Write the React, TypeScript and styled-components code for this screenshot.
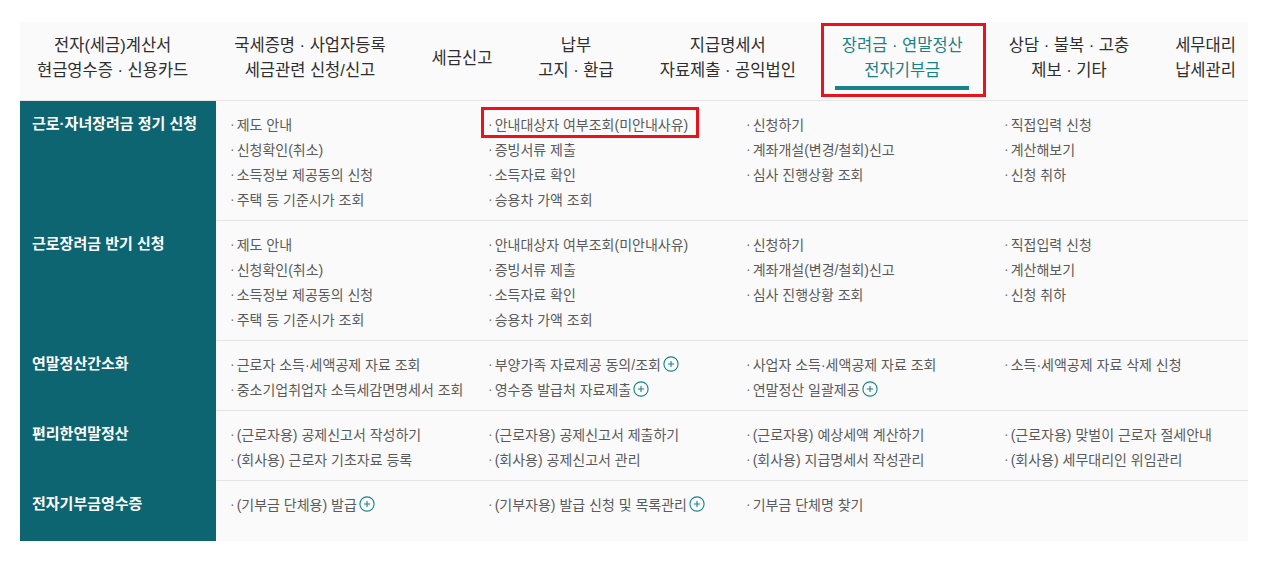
import React from "react";
import styled, { createGlobalStyle, css } from "styled-components";

const GlobalStyle = createGlobalStyle`
  html, body { margin: 0; padding: 0; background: #ffffff; }
  body { font-family: "Liberation Sans", "Noto Sans CJK KR", sans-serif; }
  * { box-sizing: border-box; }
`;

const TEAL = "#0c6570";
const ACCENT = "#17828a";
const RED = "#e8141b";

const Page = styled.div`
  padding: 22px 15px 20px 20px;
`;

const Panel = styled.div`
  width: 1228px;
  background: #fafafa;
`;

const TabBar = styled.nav`
  height: 79px;
  display: flex;
  justify-content: space-between;
  align-items: stretch;
  padding: 0 12px 0 17px;
  border-bottom: 1px solid #e6e6e6;
`;

const Tab = styled.div<{ $active?: boolean }>`
  position: relative;
  display: flex;
  flex-direction: column;
  justify-content: center;
  align-items: center;
  padding-bottom: 6px;
  font-size: 16.5px;
  line-height: 25px;
  color: ${(p) => (p.$active ? ACCENT : "#2e2e2e")};
  white-space: nowrap;
  ${(p) =>
    p.$active &&
    css`
      &::before {
        content: "";
        position: absolute;
        left: -7px;
        right: -6px;
        bottom: 10px;
        height: 4px;
        background: ${ACCENT};
      }
      &::after {
        content: "";
        position: absolute;
        left: -21px;
        right: -23px;
        top: 1px;
        bottom: 3px;
        border: 3px solid ${RED};
      }
    `}
`;

const Row = styled.div<{ $last?: boolean }>`
  display: grid;
  grid-template-columns: 196px 1fr;
  min-height: ${(p) => (p.$last ? "60px" : "0")};
`;

const Label = styled.div`
  background: ${TEAL};
  color: #ffffff;
  font-size: 15px;
  font-weight: 700;
  line-height: 25px;
  padding: 10px 0 0 12px;
  white-space: nowrap;
`;

const Cells = styled.div<{ $last?: boolean }>`
  display: grid;
  grid-template-columns: repeat(4, 1fr);
  padding: 10px 0 9px;
  border-bottom: 1px solid ${(p) => (p.$last ? "transparent" : "#e4e4e4")};
`;

const List = styled.ul`
  list-style: none;
  margin: 0;
  padding: 0 0 0 14px;
`;

const Item = styled.li<{ $marked?: boolean }>`
  position: relative;
  display: flex;
  align-items: center;
  width: fit-content;
  height: 25px;
  font-size: 14px;
  color: #5a5a5a;
  white-space: nowrap;
  &::before {
    content: "·";
    margin-right: 2px;
    color: #777;
  }
  ${(p) =>
    p.$marked &&
    css`
      &::after {
        content: "";
        position: absolute;
        left: -7px;
        right: -11px;
        top: -4px;
        bottom: -2px;
        border: 3px solid ${RED};
      }
    `}
`;

const PlusIcon = styled.svg`
  width: 16px;
  height: 16px;
  margin-left: 2px;
  flex: none;
`;

const Plus = () => (
  <PlusIcon viewBox="0 0 16 16" aria-hidden="true">
    <circle cx="8" cy="8" r="7.1" fill="none" stroke={ACCENT} strokeWidth="1.1" />
    <path d="M8 4.9v6.2M4.9 8h6.2" stroke={ACCENT} strokeWidth="1.1" />
  </PlusIcon>
);

type Entry = { text: string; plus?: boolean; marked?: boolean };
type Section = { label: string; cols: Entry[][] };

const e = (text: string, plus = false, marked = false): Entry => ({ text, plus, marked });

const tabs: { lines: string[]; active?: boolean }[] = [
  { lines: ["전자(세금)계산서", "현금영수증 · 신용카드"] },
  { lines: ["국세증명 · 사업자등록", "세금관련 신청/신고"] },
  { lines: ["세금신고"] },
  { lines: ["납부", "고지 · 환급"] },
  { lines: ["지급명세서", "자료제출 · 공익법인"] },
  { lines: ["장려금 · 연말정산", "전자기부금"], active: true },
  { lines: ["상담 · 불복 · 고충", "제보 · 기타"] },
  { lines: ["세무대리", "납세관리"] },
];

const incentiveCols = (mark: boolean): Entry[][] => [
  [e("제도 안내"), e("신청확인(취소)"), e("소득정보 제공동의 신청"), e("주택 등 기준시가 조회")],
  [e("안내대상자 여부조회(미안내사유)", false, mark), e("증빙서류 제출"), e("소득자료 확인"), e("승용차 가액 조회")],
  [e("신청하기"), e("계좌개설(변경/철회)신고"), e("심사 진행상황 조회")],
  [e("직접입력 신청"), e("계산해보기"), e("신청 취하")],
];

const sections: Section[] = [
  { label: "근로·자녀장려금 정기 신청", cols: incentiveCols(true) },
  { label: "근로장려금 반기 신청", cols: incentiveCols(false) },
  {
    label: "연말정산간소화",
    cols: [
      [e("근로자 소득·세액공제 자료 조회"), e("중소기업취업자 소득세감면명세서 조회")],
      [e("부양가족 자료제공 동의/조회", true), e("영수증 발급처 자료제출", true)],
      [e("사업자 소득·세액공제 자료 조회"), e("연말정산 일괄제공", true)],
      [e("소득·세액공제 자료 삭제 신청")],
    ],
  },
  {
    label: "편리한연말정산",
    cols: [
      [e("(근로자용) 공제신고서 작성하기"), e("(회사용) 근로자 기초자료 등록")],
      [e("(근로자용) 공제신고서 제출하기"), e("(회사용) 공제신고서 관리")],
      [e("(근로자용) 예상세액 계산하기"), e("(회사용) 지급명세서 작성관리")],
      [e("(근로자용) 맞벌이 근로자 절세안내"), e("(회사용) 세무대리인 위임관리")],
    ],
  },
  {
    label: "전자기부금영수증",
    cols: [
      [e("(기부금 단체용) 발급", true)],
      [e("(기부자용) 발급 신청 및 목록관리", true)],
      [e("기부금 단체명 찾기")],
      [],
    ],
  },
];

export default function App() {
  return (
    <>
      <GlobalStyle />
      <Page>
        <Panel>
          <TabBar>
            {tabs.map((t, i) => (
              <Tab key={i} $active={t.active}>
                {t.lines.map((l, j) => (
                  <span key={j}>{l}</span>
                ))}
              </Tab>
            ))}
          </TabBar>
          {sections.map((s, i) => {
            const last = i === sections.length - 1;
            return (
              <Row key={i} $last={last}>
                <Label>{s.label}</Label>
                <Cells $last={last}>
                  {s.cols.map((col, c) => (
                    <List key={c}>
                      {col.map((it, k) => (
                        <Item key={k} $marked={it.marked}>
                          {it.text}
                          {it.plus && <Plus />}
                        </Item>
                      ))}
                    </List>
                  ))}
                </Cells>
              </Row>
            );
          })}
        </Panel>
      </Page>
    </>
  );
}
